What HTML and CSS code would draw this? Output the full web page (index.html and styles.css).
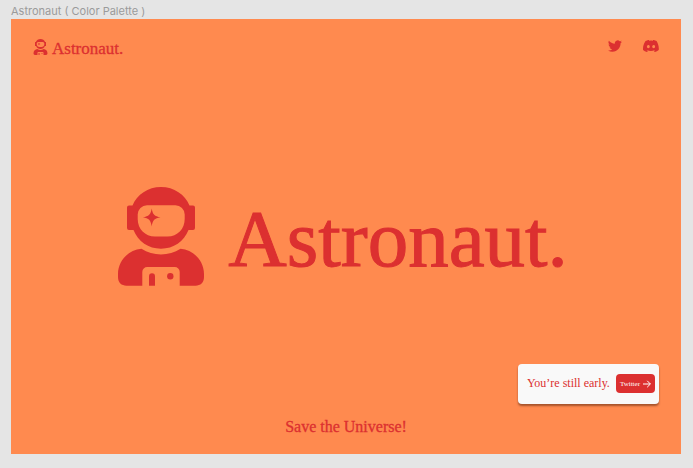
FILE: index.html
```html
<!DOCTYPE html>
<html lang="en">
<head>
<meta charset="utf-8">
<meta name="viewport" content="width=device-width, initial-scale=1">
<title>Astronaut</title>
<link rel="stylesheet" href="styles.css">
</head>
<body>
<svg class="sprite" aria-hidden="true">
  <symbol id="astronaut" viewBox="0 0 86 99">
    <path fill-rule="evenodd" d="M14.5 18.5C19 7.500 30 0 43 0s24 7.500 28.500 18.500H75a2 2 0 0 1 2 2V41a2 2 0 0 1-2 2h-4.500C66 54.500 55.500 61.700 43 61.700S20 54.500 15.500 43H11a2 2 0 0 1-2-2V20.500a2 2 0 0 1 2-2zM29 18.200a9.300 9.300 0 0 0-9.300 9.300V32c0 10 7.300 17.500 17.300 17.500h12.500c10 0 17.200-7.500 17.200-17.500v-4.500a9.300 9.300 0 0 0-9.300-9.300z"/>
    <path d="M33.700 21.500c1 6 2.800 7.800 8.800 8.800-6 1-7.800 2.800-8.800 9.200-1-6.400-2.800-8.200-8.800-9.200 6-1 7.800-2.800 8.800-8.800z"/>
    <path d="M23.500 61.700C35 69.300 51 69.300 62.500 61.700 76 63 86 74 86 87v3c0 5.500-3.500 8.700-8.500 8.700H61.700V85a5 5 0 0 0-5-5H29.300a5 5 0 0 0-5 5v13.700H8.500C3.500 98.700 0 95.500 0 90v-3C0 74 10 63 23.500 61.700z"/>
    <path d="M31 98.700v-9.400a3 3 0 0 1 6 0v9.400z"/>
    <circle cx="52.300" cy="89.300" r="3.200"/>
  </symbol>
</svg>
<p class="label">Astronaut ( Color Palette )</p>
<div class="frame">
  <header class="header">
    <a class="brand" href="#"><svg class="brand-icon" aria-hidden="true"><use href="#astronaut"/></svg>Astronaut.</a>
    <nav class="social" aria-label="Social">
      <a href="#" aria-label="Twitter"><svg class="twitter" viewBox="0 2 24 20" aria-hidden="true"><path d="M23.950 4.570a10 10 0 0 1-2.820.770 4.960 4.960 0 0 0 2.160-2.720c-.950.550-2 .950-3.130 1.180a4.920 4.920 0 0 0-8.380 4.480C7.690 8.090 4.070 6.130 1.640 3.160a4.920 4.920 0 0 0 1.520 6.570 4.900 4.900 0 0 1-2.230-.610v.060a4.920 4.920 0 0 0 3.950 4.830 5 5 0 0 1-2.210.080 4.940 4.940 0 0 0 4.600 3.420A9.870 9.870 0 0 1 0 19.540a13.990 13.990 0 0 0 7.550 2.210c9.050 0 14-7.500 14-13.980 0-.210 0-.420-.020-.630a9.940 9.940 0 0 0 2.460-2.550z"/></svg></a>
      <a href="#" aria-label="Discord"><svg class="discord" viewBox="0 3 24 18" aria-hidden="true"><path fill-rule="evenodd" d="M20.320 4.370a19.800 19.800 0 0 0-4.890-1.520c-.250.430-.450.850-.600 1.250a18.300 18.300 0 0 0-5.490 0c-.180-.430-.400-.850-.620-1.250a19.700 19.700 0 0 0-4.880 1.520C.530 9.050-.320 13.580.100 18.060a19.900 19.900 0 0 0 5.990 3.030c.460-.630.870-1.300 1.230-1.990-.650-.250-1.270-.550-1.870-.900l.370-.300a14.200 14.200 0 0 0 12.070 0l.370.300c-.600.350-1.220.650-1.870.890.360.700.770 1.360 1.230 1.990a19.800 19.800 0 0 0 6-3.030c.500-5.180-.840-9.670-3.300-13.680zM8.020 15.330c-1.180 0-2.160-1.080-2.160-2.420s.960-2.420 2.160-2.420 2.180 1.090 2.160 2.420c0 1.340-.960 2.420-2.160 2.420zm7.970 0c-1.180 0-2.160-1.080-2.160-2.420s.960-2.420 2.160-2.420 2.180 1.090 2.160 2.420c0 1.340-.950 2.420-2.160 2.420z"/></svg></a>
    </nav>
  </header>
  <main class="hero">
    <svg class="hero-icon" aria-hidden="true"><use href="#astronaut"/></svg>
    <h1 class="title">Astronaut.</h1>
  </main>
  <footer class="footer">
    <div class="toast">
      <span>You’re still early.</span>
      <button class="button" type="button">Twitter<svg class="arrow" viewBox="0 0 8 8" aria-hidden="true"><path d="M0 4h7.300M4.200 .8 7.400 4 4.200 7.200"/></svg></button>
    </div>
    <p class="tagline">Save the Universe!</p>
  </footer>
</div>
</body>
</html>
```
FILE: styles.css
```css
* {
  box-sizing: border-box;
}

body {
  display: flex;
  flex-direction: column;
  min-height: 100vh;
  margin: 0;
  padding: 3px 12px 14px 11px;
  background: #e5e5e5;
  color: #dc3030;
  font-family: "Liberation Serif", "Times New Roman", serif;
}

h1,
p {
  margin: 0;
  font-weight: 400;
}

a {
  color: inherit;
  text-decoration: none;
}

svg {
  display: block;
  flex: none;
  fill: currentColor;
}

.sprite {
  position: absolute;
  width: 0;
  height: 0;
}

.label {
  color: #9b9b9b;
  font: 11px/16px Inter, sans-serif;
}

.frame {
  display: flex;
  flex: 1;
  flex-direction: column;
  background: #ff8a4f;
}

.header {
  display: flex;
  justify-content: space-between;
  padding: 20px 22px 0;
}

.brand {
  display: flex;
  gap: 4px;
  font-size: 17px;
  line-height: 20px;
  -webkit-text-stroke: 0.3px;
}

.brand-icon {
  width: 15px;
  height: 16px;
}

.social {
  display: flex;
  align-items: center;
  gap: 21px;
  height: 14px;
}

.twitter {
  width: 14px;
  height: 12px;
}

.discord {
  width: 16px;
  height: 12px;
}

.hero {
  display: flex;
  flex: 1;
  align-items: center;
  justify-content: center;
  gap: 24px;
  padding: 50px 6px 0 0;
}

.hero-icon {
  width: 86px;
  height: 99px;
}

.title {
  padding-top: 4px;
  font-size: 81px;
  line-height: 80px;
  -webkit-text-stroke: 1px;
}

.footer {
  display: flex;
  flex-direction: column;
  padding: 0 22px 17px;
}

.toast {
  display: flex;
  align-items: center;
  align-self: flex-end;
  gap: 6px;
  padding: 10px 4px 11px 9px;
  border-radius: 4px;
  background: #f9f9f9;
  box-shadow: 0 2px 2px rgb(80 30 10 / 50%);
  font-size: 12px;
  line-height: 19px;
}

.button {
  display: flex;
  align-items: center;
  gap: 3px;
  height: 19px;
  padding: 0 4px;
  border: 0;
  border-radius: 4px;
  background: #dc3030;
  color: #fff;
  font: 7px/10px "Liberation Serif", serif;
}

.arrow {
  width: 8px;
  height: 8px;
  fill: none;
  stroke: currentColor;
}

.tagline {
  margin-top: 13px;
  font-size: 16px;
  line-height: 20px;
  text-align: center;
  -webkit-text-stroke: 0.3px;
}
```
